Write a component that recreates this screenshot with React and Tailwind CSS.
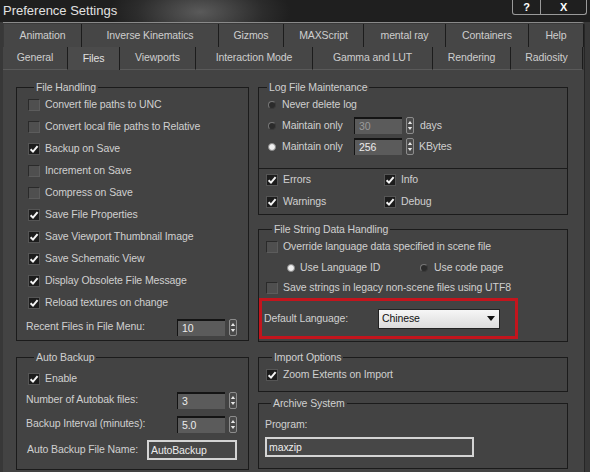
import React from 'react';

const row1 = [
    ['Animation', 'w-[78px]'],
    ['Inverse Kinematics', 'w-[137px]'],
    ['Gizmos', 'w-[65px]'],
    ['MAXScript', 'w-[80px]'],
    ['mental ray', 'w-[82px]'],
    ['Containers', 'w-[83px]'],
    ['Help', 'w-[55px]'],
];

const row2 = [
    ['General', 'w-[65px]'],
    ['Files', 'w-[52px]'],
    ['Viewports', 'w-[76px]'],
    ['Interaction Mode', 'w-[117px]'],
    ['Gamma and LUT', 'w-[120px]'],
    ['Rendering', 'w-[78px]'],
    ['Radiosity', 'w-[72px]'],
];

const Check = ({ checked }) => (
    <span
        className={
            checked
                ? 'w-[12px] h-[12px] shrink-0 flex items-center justify-center bg-[#1c1c1c] border border-[#555]'
                : 'w-[12px] h-[12px] shrink-0 bg-[#4f4f4f] border border-t-[#2a2a2a] border-l-[#2a2a2a] border-r-[#5c5c5c] border-b-[#5c5c5c]'
        }
    >
        {checked && (
            <svg width="10" height="10" viewBox="0 0 10 10">
                <path d="M1.6 5.2 L4 7.6 L8.6 2.2" stroke="#f4f4f4" strokeWidth="2" fill="none" />
            </svg>
        )}
    </span>
);

const Radio = ({ on }) => (
    <span
        className={
            on
                ? 'w-[8px] h-[8px] shrink-0 rounded-full bg-[#f0f0f0] border border-[#8a8a8a]'
                : 'w-[8px] h-[8px] shrink-0 rounded-full bg-[#2b2b2b] border border-l-[#777] border-t-[#777] border-r-[#3a3a3a] border-b-[#3a3a3a]'
        }
    />
);

const Arrows = () => (
    <svg width="8" height="17" viewBox="0 0 8 17" className="shrink-0">
        <rect x="0.5" y="0.5" width="7" height="16" rx="1.5" fill="#4a4a4a" stroke="#8c8c8c" />
        <path d="M1.8 7 L4 4 L6.2 7 Z" fill="#e6e6e6" />
        <path d="M1.8 10 L4 13 L6.2 10 Z" fill="#e6e6e6" />
    </svg>
);

const Spinner = ({ value, dim }) => (
    <div className="flex items-center gap-[4px]">
        <div
            className={
                dim
                    ? 'w-[48px] h-[17px] bg-[#5b5b5b] border-t-2 border-l border-[#141414] pl-[4px] leading-[14px] text-[#9a9a9a]'
                    : 'w-[48px] h-[17px] bg-[#5b5b5b] border-t-2 border-l border-[#141414] pl-[4px] leading-[14px] text-[#ececec]'
            }
        >
            {value}
        </div>
        <Arrows />
    </div>
);

const Group = ({ title, className, legend, children }) => (
    <fieldset className={`border border-[#1b1b1b] ${className}`}>
        <legend className={`${legend} px-[2px] leading-[14px] text-[#d0d0d0]`}>{title}</legend>
        {children}
    </fieldset>
);

const CheckRow = ({ checked, label, h }) => (
    <div className={`flex items-center gap-[5px] ${h}`}>
        <Check checked={checked} />
        <span>{label}</span>
    </div>
);

const App = () => {
    return (
        <div className="w-[590px] h-[472px] overflow-hidden bg-[#383838] text-[10.5px] tracking-[-0.1px] text-[#d0d0d0] font-['Liberation_Sans',Arial,sans-serif]">
            {/* title bar */}
            <div className="h-[22px] flex justify-between bg-[radial-gradient(ellipse_90px_40px_at_200px_12px,#5a5a5a,#2c2c2c_70%,#1f1f1f)]">
                <div className="pl-[3px] pt-[2px] text-[13px] tracking-normal leading-[18px] text-[#e2e2e2]">Preference Settings</div>
                <div className="mr-[3px] h-[15px] w-[75px] flex border border-t-0 border-[#9a9a9a] rounded-b-[3px] text-white font-bold text-[11px]">
                    <div className="w-[28px] flex items-center justify-center border-r border-[#9a9a9a] leading-none">?</div>
                    <div className="flex-1 flex items-center justify-center leading-none">X</div>
                </div>
            </div>

            {/* tabs + panel */}
            <div className="ml-[3px] w-[582px] h-[450px] bg-[#434343] border-t border-r border-[#8a8a8a] rounded-tr-[4px] border-r-[#262626]">
                <div className="h-[24px] flex pl-[1px] pt-[1px] bg-[#3a3a3a]">
                    {row1.map(([t, w]) => (
                        <div key={t} className={`${w} flex items-center justify-center bg-[#464646] border-r border-[#1c1c1c] text-[#cecece]`}>
                            {t}
                        </div>
                    ))}
                </div>
                <div className="h-[23px] flex bg-[#3a3a3a]">
                    {row2.map(([t, w]) =>
                        t === 'Files' ? (
                            <div key={t} className={`${w} flex items-center justify-center bg-[#4b4b4b] border-r border-[#1c1c1c] text-[#e0e0e0]`}>
                                {t}
                            </div>
                        ) : (
                            <div key={t} className={`${w} flex items-center justify-center bg-[#464646] border-r border-b border-[#1c1c1c] border-b-[#5a5a5a] text-[#cecece]`}>
                                {t}
                            </div>
                        )
                    )}
                </div>

                <div className="flex gap-[9px] pl-[13px] pt-[10px]">
                    {/* left column */}
                    <div className="w-[233px] flex flex-col">
                        <Group title="File Handling" legend="ml-[6px]" className="pl-[11px] pb-[2px]">
                            <CheckRow h="h-[22px]" label="Convert file paths to UNC" />
                            <CheckRow h="h-[22px]" label="Convert local file paths to Relative" />
                            <CheckRow h="h-[22px]" checked label="Backup on Save" />
                            <CheckRow h="h-[22px]" label="Increment on Save" />
                            <CheckRow h="h-[22px]" label="Compress on Save" />
                            <CheckRow h="h-[22px]" checked label="Save File Properties" />
                            <CheckRow h="h-[22px]" checked label="Save Viewport Thumbnail Image" />
                            <CheckRow h="h-[22px]" checked label="Save Schematic View" />
                            <CheckRow h="h-[22px]" checked label="Display Obsolete File Message" />
                            <CheckRow h="h-[22px]" checked label="Reload textures on change" />
                            <div className="mt-[2px] h-[22px] -ml-[2px] flex items-center">
                                <span className="w-[151px]">Recent Files in File Menu:</span>
                                <Spinner value="10" />
                            </div>
                        </Group>

                        <Group title="Auto Backup" legend="ml-[6px]" className="mt-[9px] pl-[11px] pb-[6px]">
                            <div className="mt-[5px]">
                                <CheckRow h="h-[20px]" checked label="Enable" />
                            </div>
                            <div className="h-[22px] -ml-[2px] flex items-center">
                                <span className="w-[151px]">Number of Autobak files:</span>
                                <Spinner value="3" />
                            </div>
                            <div className="h-[26px] -ml-[2px] flex items-center">
                                <span className="w-[151px]">Backup Interval (minutes):</span>
                                <Spinner value="5.0" />
                            </div>
                            <div className="h-[26px] -ml-[1px] flex items-center">
                                <span className="w-[120px]">Auto Backup File Name:</span>
                                <div className="w-[90px] h-[20px] border-2 border-[#d4d4d4] bg-[#474747] pl-[2px] leading-[16px] text-[#ececec]">
                                    AutoBackup
                                </div>
                            </div>
                        </Group>
                    </div>

                    {/* right column */}
                    <div className="w-[310px] flex flex-col">
                        <Group title="Log File Maintenance" legend="ml-[8px]" className="">
                            <div className="pl-[9px] pb-[11px]">
                                <div className="h-[21px] flex items-center gap-[6px]">
                                    <Radio />
                                    <span>Never delete log</span>
                                </div>
                                <div className="h-[21px] flex items-center">
                                    <Radio />
                                    <span className="ml-[6px] w-[72px]">Maintain only</span>
                                    <Spinner value="30" dim />
                                    <span className="ml-[6px]">days</span>
                                </div>
                                <div className="h-[21px] flex items-center">
                                    <Radio on />
                                    <span className="ml-[6px] w-[72px]">Maintain only</span>
                                    <Spinner value="256" />
                                    <span className="ml-[5px]">KBytes</span>
                                </div>
                            </div>
                            <div className="border-t border-[#1b1b1b] pl-[7px] pb-[1px] grid grid-cols-[118px_1fr]">
                                <CheckRow h="h-[22px]" checked label="Errors" />
                                <CheckRow h="h-[22px]" checked label="Info" />
                                <CheckRow h="h-[22px]" checked label="Warnings" />
                                <CheckRow h="h-[22px]" checked label="Debug" />
                            </div>
                        </Group>

                        <Group title="File String Data Handling" legend="ml-[6px]" className="mt-[7px] pl-[7px] pb-[2px]">
                            <CheckRow h="h-[21px]" label="Override language data specified in scene file" />
                            <div className="h-[21px] flex items-center pl-[21px]">
                                <div className="w-[133px] flex items-center gap-[5px]">
                                    <Radio on />
                                    <span>Use Language ID</span>
                                </div>
                                <div className="flex items-center gap-[6px]">
                                    <Radio />
                                    <span>Use code page</span>
                                </div>
                            </div>
                            <CheckRow h="h-[20px]" label="Save strings in legacy non-scene files using UTF8" />
                            <div className="-ml-[7px] w-[259px] h-[41px] border-[3px] border-[#c3151d] flex items-center pl-[2px]">
                                <span className="w-[114px]">Default Language:</span>
                                <div className="w-[122px] h-[20px] flex items-center justify-between border border-[#222] bg-[linear-gradient(#f6f6f6,#dcdcdc)] text-[#111] pl-[3px] pr-[4px]">
                                    <span>Chinese</span>
                                    <svg width="8" height="5" viewBox="0 0 8 5">
                                        <path d="M0 0 L8 0 L4 5 Z" fill="#111" />
                                    </svg>
                                </div>
                            </div>
                        </Group>

                        <Group title="Import Options" legend="ml-[6px]" className="mt-[8px] pl-[7px] pb-[5px]">
                            <CheckRow h="h-[22px]" checked label="Zoom Extents on Import" />
                        </Group>

                        <Group title="Archive System" legend="ml-[6px]" className="mt-[4px] pl-[6px] pb-[11px]">
                            <div className="mt-[5px] h-[20px] flex items-center">Program:</div>
                            <div className="mt-[2px] w-[209px] h-[20px] border-2 border-[#d4d4d4] bg-[#474747] pl-[2px] leading-[16px] text-[#ececec]">
                                maxzip
                            </div>
                        </Group>
                    </div>
                </div>
            </div>
        </div>
    );
};

export default App;
